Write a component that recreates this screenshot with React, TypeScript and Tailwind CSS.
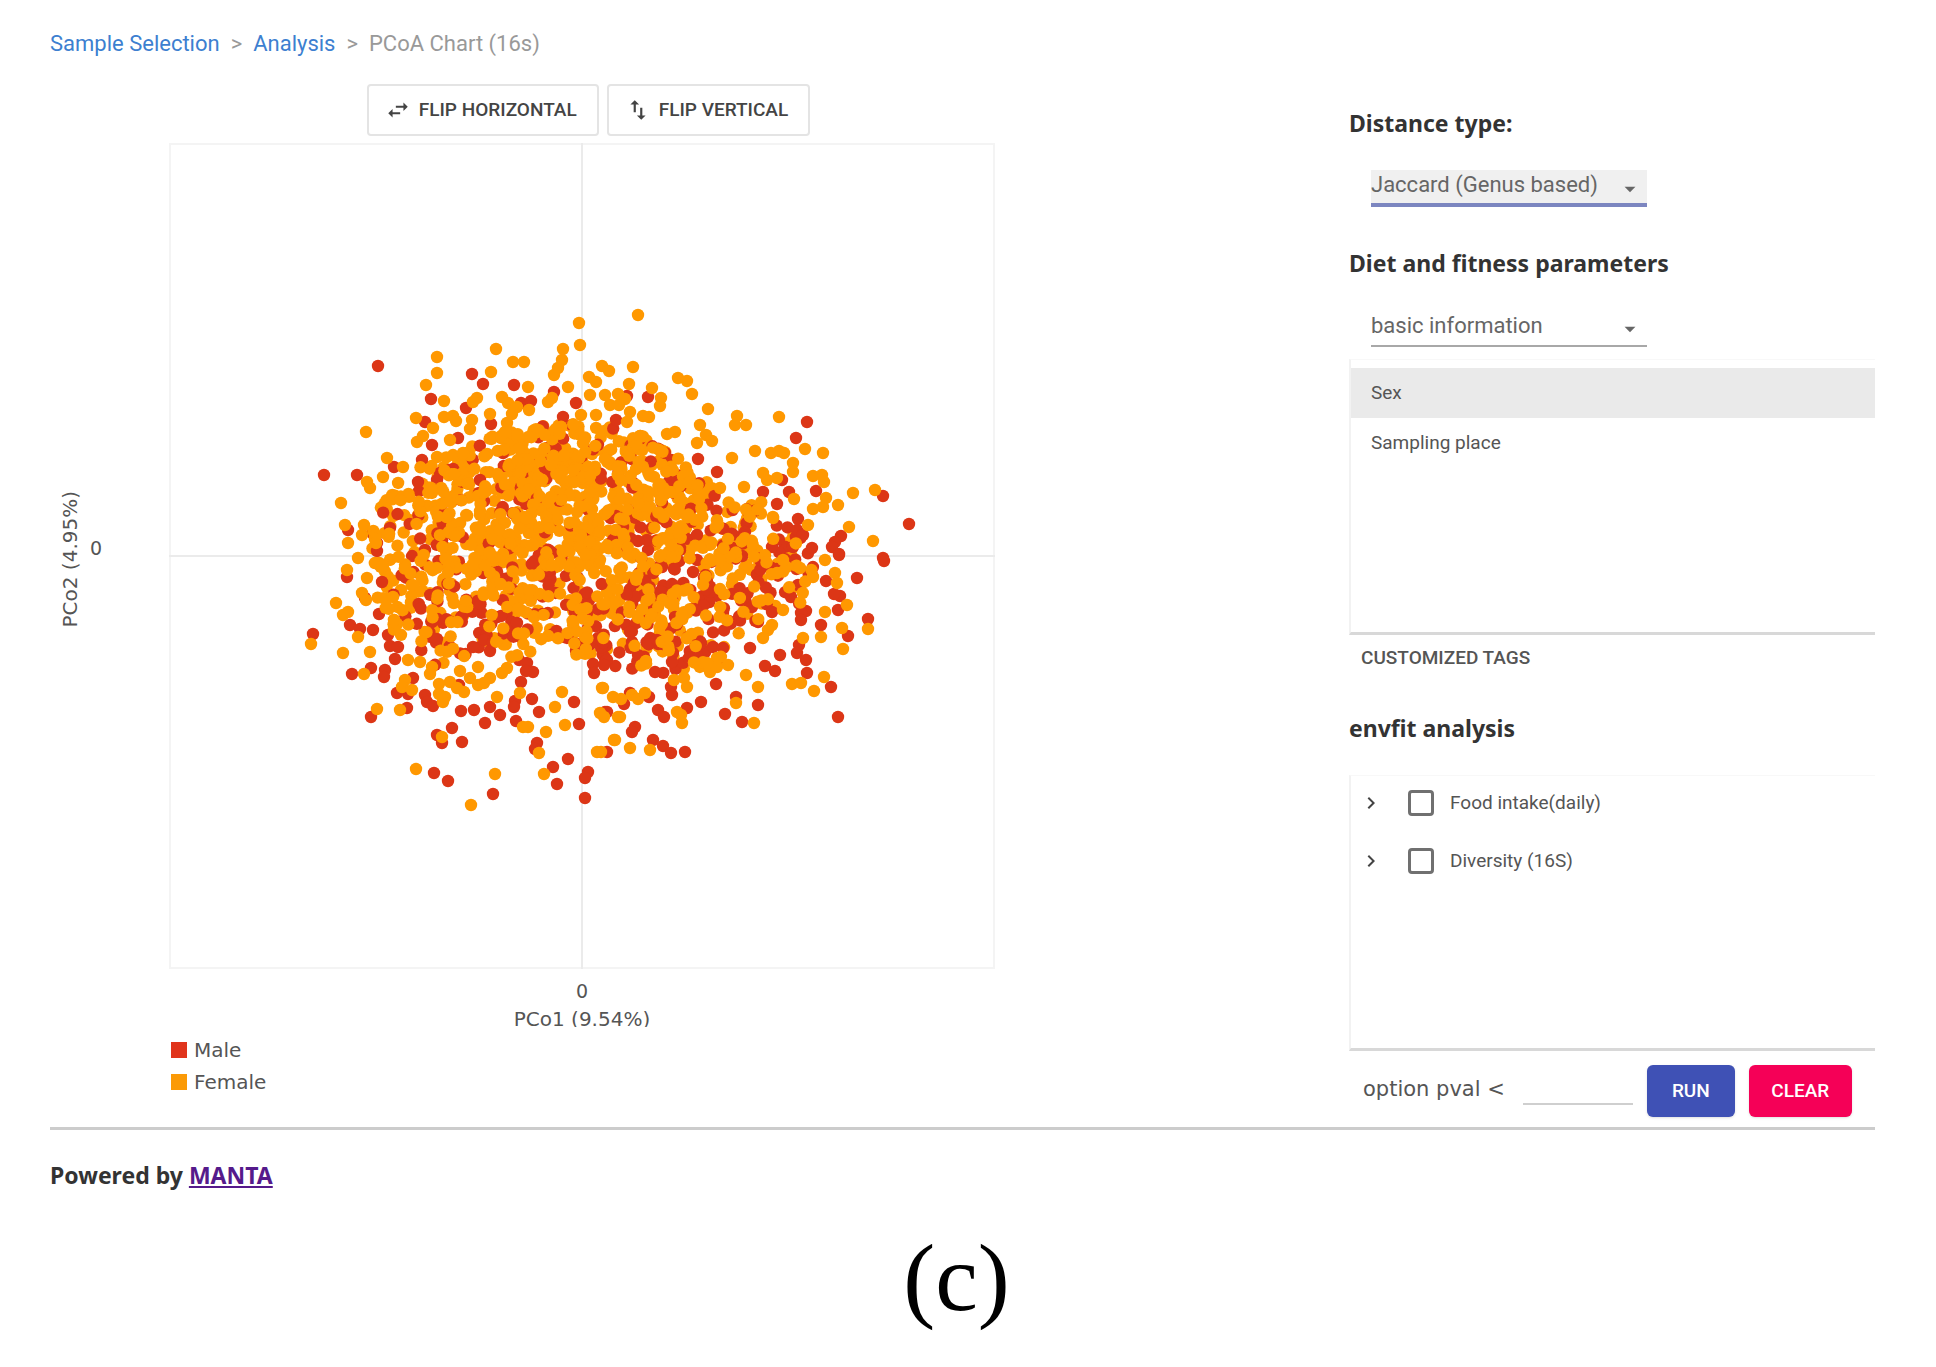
import { useMemo, useState } from "react";
import { MdArrowDropDown, MdChevronRight, MdSwapHoriz, MdSwapVert } from "react-icons/md";

type Point = [number, number];
type Sample = { x: number; y: number; sex: 'male' | 'female' };

const SIZE = 826;

// Outer samples, in chart units
const femalePoints: Point[] = [
  [410,180],[411,202],[327,206],[268,214],[268,230],[394,206],[393,217],[389,225],[385,232],[344,219],[355,219],[322,229],
  [433,223],[440,228],[257,242],[359,244],[399,244],[420,234],[427,239],[275,258],[308,255],[304,259],[333,254],[339,260],[348,264],
  [360,267],[379,259],[383,255],[421,252],[247,275],[275,274],[284,273],[287,278],[321,271],[301,286],[248,299],[254,293],[197,289],
  [218,315],[234,324],[214,334],[198,339],[201,345],[172,360],[176,382],[179,400],[195,382],[193,392],[189,415],[338,280],
  [336,289],[281,297],[294,310],[268,314],[469,172],[464,224],[509,235],[518,238],[523,251],[460,241],[483,245],[492,255],
  [491,263],[539,266],[568,273],[566,282],[577,282],[610,274],[474,273],[480,274],[458,279],[461,269],[531,282],[537,292],[543,298],
  [528,300],[506,289],[498,291],[471,293],[586,308],[602,310],[610,308],[615,310],[636,306],[654,310],[563,315],[624,320],[624,329],
  [644,333],[653,332],[655,339],[684,350],[706,347],[669,362],[657,355],[654,364],[644,366],[625,356],[680,384],[704,398],
  [575,344],[551,345],[639,382],[594,330],[598,337],[608,335],[198,435],[167,460],[179,469],[174,472],[142,501],[174,510],
  [224,454],[197,457],[228,481],[225,477],[189,494],[201,509],[195,531],[236,537],[233,544],[239,517],[208,566],[231,567],
  [273,594],[247,626],[326,631],[302,662],[263,524],[261,531],[281,539],[276,554],[274,559],[309,524],[309,542],[321,535],
  [338,525],[333,530],[295,549],[328,554],[354,584],[359,584],[377,589],[386,564],[393,549],[396,582],[370,610],[375,631],
  [433,545],[444,554],[431,570],[445,597],[428,609],[432,609],[449,574],[351,550],[673,485],[674,506],[699,486],[678,462],
  [666,430],[668,440],[656,417],[656,469],[652,494],[655,534],[645,548],[623,541],[632,540],[634,495],[577,532],[589,544],
  [585,580],[567,560],[513,580],[508,569],[518,544],[461,605],[446,597],[481,607],[451,574],[434,545],[559,522],[541,529],
  [548,515],[599,487],[603,482],[594,495],[614,467],[644,434],[631,425],[608,430],[614,417],[456,256],[441,262],[449,251],
  [427,272],[412,272],[264,285],[303,277],[343,271],[450,262],[436,252],[178,427],[207,400],[214,423],[193,450],[243,547],
  [288,545],[291,528],[301,535],[315,540],[251,519],[270,541],[270,551],[452,556],[463,552],[469,556],[476,550],[505,537],
  [515,535],[512,572],[435,574],[548,524],[538,520],
];

const malePoints: Point[] = [
  [209,223],[303,231],[314,241],[345,242],[385,249],[407,260],[262,256],[297,265],[256,279],[263,302],[253,317],[225,324],
  [188,332],[155,332],[352,260],[362,258],[322,281],[289,295],[394,274],[403,282],[447,277],[334,310],[271,330],[268,337],
  [249,339],[311,337],[310,350],[221,385],[284,392],[208,408],[256,407],[179,387],[458,253],[479,254],[638,279],[627,295],
  [496,310],[529,316],[548,329],[647,348],[714,353],[740,381],[620,349],[608,361],[613,337],[594,349],[629,376],[628,387],
  [634,392],[672,393],[666,399],[663,404],[670,412],[714,415],[643,405],[624,404],[603,404],[576,389],[574,392],[478,397],
  [469,398],[453,375],[454,384],[528,392],[521,337],[506,342],[144,491],[178,434],[213,439],[210,471],[263,479],[268,496],
  [181,482],[191,486],[204,487],[219,492],[221,503],[229,504],[226,516],[183,531],[202,525],[216,527],[215,534],[228,550],
  [239,551],[244,535],[238,565],[202,574],[256,552],[258,559],[264,563],[292,568],[305,567],[321,564],[316,580],[331,572],
  [346,558],[345,564],[347,578],[363,556],[370,569],[352,539],[405,559],[410,581],[283,585],[268,592],[273,600],[293,599],
  [265,630],[279,638],[324,651],[368,600],[366,606],[384,624],[399,616],[388,641],[419,629],[416,635],[416,655],[438,609],
  [436,569],[321,508],[304,504],[332,473],[348,480],[358,520],[364,529],[407,508],[424,521],[433,498],[418,470],[419,485],
  [715,418],[688,435],[670,411],[699,476],[679,493],[669,467],[671,453],[665,451],[657,438],[652,482],[637,468],[632,470],
  [632,477],[630,502],[628,510],[637,517],[638,530],[662,544],[669,574],[611,512],[596,523],[606,528],[589,562],[589,479],
  [581,505],[573,579],[556,571],[567,554],[532,559],[547,541],[518,565],[502,544],[503,552],[489,567],[495,574],[466,584],
  [463,589],[484,597],[494,603],[502,610],[516,609],[480,554],[455,561],[438,569],[486,529],[504,510],[503,519],[629,442],
  [622,454],[554,470],[544,504],[554,505],[528,417],[524,429],[591,417],[603,469],[583,464],[503,457],[506,474],[488,497],
  [461,489],[463,499],[469,512],[434,500],[438,517],[357,528],[208,400],[196,455],[290,542],[461,550],[425,530],[435,522],
];

// Outline of the dense middle of the cloud
const core: Point[] = [
  [215,352],[250,322],[290,308],[330,290],[380,278],[440,284],[485,296],[530,325],[560,355],[600,358],[630,385],[650,425],
  [640,462],[600,472],[570,497],[550,518],[510,534],[460,528],[420,516],[385,504],[350,518],[310,508],[270,524],[235,506],
  [210,460],[200,425],[202,390],
];

function inCore(x: number, y: number) {
  let inside = false;
  for (let i = 0, j = core.length - 1; i < core.length; j = i++) {
    const [xi, yi] = core[i];
    const [xj, yj] = core[j];
    if (yi > y !== yj > y && x < ((xj - xi) * (y - yi)) / (yj - yi) + xi) inside = !inside;
  }
  return inside;
}

function buildSamples(): Sample[] {
  let seed = 7;
  const random = () => {
    seed = (seed * 1664525 + 1013904223) % 4294967296;
    return seed / 4294967296;
  };
  const females: Sample[] = [];
  const males: Sample[] = [];
  while (females.length + males.length < 1450) {
    const x = 195 + random() * 460;
    const y = 275 + random() * 265;
    const keep = random();
    const pick = random();
    if (!inCore(x, y)) continue;
    const distance = Math.hypot((x - 390) / 230, (y - 370) / 170);
    if (keep > 1.1 - distance * 0.6) continue;
    const maleShare = 0.14 + Math.max(0, (y - 370) / 170) * 0.36 + Math.max(0, (x - 440) / 200) * 0.22;
    if (pick < maleShare) males.push({ x, y, sex: 'male' });
    else females.push({ x, y, sex: 'female' });
  }
  const half = Math.floor(females.length * 0.5);
  return [
    ...females.slice(0, half),
    ...males,
    ...malePoints.map(([x, y]): Sample => ({ x, y, sex: 'male' })),
    ...females.slice(half),
    ...femalePoints.map(([x, y]): Sample => ({ x, y, sex: 'female' })),
  ];
}

function ScatterChart({ flipX, flipY }: { flipX: boolean; flipY: boolean }) {
  const samples = useMemo(buildSamples, []);

  return (
    <svg viewBox="0 0 826 826" className="block w-[826px] shrink-0" role="img" aria-label="PCoA scatter chart">
      <rect x="1" y="1" width="824" height="824" fill="none" stroke="#f4f4f4" strokeWidth="2" />
      <path d="M413 0V826M0 413H826" stroke="#ebebeb" strokeWidth="2" />
      {samples.map((s, i) => (
        <circle
          key={i}
          cx={flipX ? SIZE - s.x : s.x}
          cy={flipY ? SIZE - s.y : s.y}
          r="6.2"
          fill={s.sex === 'male' ? '#dc3616' : '#ff9800'}
        />
      ))}
    </svg>
  );
}

function FieldSelect({ id, options, active = false }: { id: string; options: string[]; active?: boolean }) {
  return (
    <div className="relative ml-[22px] mt-8 w-[276px]">
      <select
        id={id}
        className={`block h-[37px] w-full appearance-none pb-1 font-[Roboto] text-[22px] leading-7 text-[#666] outline-none ${
          active ? 'border-b-4 border-[#7c86c0] bg-[#f0f0f0]' : 'border-b-2 border-[#a8a8a8] bg-white'
        }`}
      >
        {options.map((option) => (
          <option key={option}>{option}</option>
        ))}
      </select>
      <MdArrowDropDown className="pointer-events-none absolute right-1 top-1.5 size-[26px] text-[#666]" />
    </div>
  );
}

export default function App() {
  const [flipX, setFlipX] = useState(false);
  const [flipY, setFlipY] = useState(false);
  const [tag, setTag] = useState('Sex');

  return (
    <div className="min-h-screen bg-white pl-[50px] pr-[61px] pt-7 font-['DejaVu_Sans',sans-serif] text-[20px] text-[#555]">
      <nav aria-label="Breadcrumb" className="flex gap-[11px] font-[Roboto] text-[22px] leading-8 text-[#999]">
        <a href="#samples" className="text-[#3d7fd0]">Sample Selection</a>
        <span>&gt;</span>
        <a href="#analysis" className="text-[#3d7fd0]">Analysis</a>
        <span>&gt;</span>
        <span>PCoA Chart (16s)</span>
      </nav>

      <main className="mt-6 flex justify-between">
        <section className="w-[1077px]">
          <div className="flex justify-center gap-2 font-[Roboto] text-[19px] font-medium text-[#444]">
            <button
              onClick={() => setFlipX(!flipX)}
              className="flex h-[52px] items-center gap-2 rounded-sm border-2 border-[#e4e4e4] pl-4 pr-5"
            >
              <MdSwapHoriz className="size-[26px]" />
              FLIP HORIZONTAL
            </button>
            <button
              onClick={() => setFlipY(!flipY)}
              className="flex h-[52px] items-center gap-2 rounded-sm border-2 border-[#e4e4e4] pl-4 pr-5"
            >
              <MdSwapVert className="size-[26px]" />
              FLIP VERTICAL
            </button>
          </div>

          {/* Chart */}
          <div className="mt-[7px] flex leading-6">
            <div className="flex w-[119px] shrink-0 items-center gap-2 pl-2">
              <span className="rotate-180 pb-1.5 [writing-mode:vertical-rl]">PCo2 (4.95%)</span>
              <span className="pb-4 text-[19px]">0</span>
            </div>
            <ScatterChart flipX={flipX} flipY={flipY} />
          </div>
          <div className="ml-[119px] w-[826px] pt-2.5 text-center leading-6">
            <p className="text-[19px]">0</p>
            <p className="mt-1 h-5 overflow-hidden">PCo1 (9.54%)</p>
          </div>
          <ul className="ml-[121px] mt-[7px] leading-8">
            <li className="flex items-center gap-[7px]">
              <span className="size-4 bg-[#e0341c]"></span>Male
            </li>
            <li className="flex items-center gap-[7px]">
              <span className="size-4 bg-[#fb9a06]"></span>Female
            </li>
          </ul>
        </section>

        {/* Settings */}
        <aside className="w-[526px] pt-6">
          <label htmlFor="distance" className="block font-['Noto_Sans'] text-[23px] font-bold leading-[30px] text-[#333]">
            Distance type:
          </label>
          <FieldSelect id="distance" options={['Jaccard (Genus based)', 'Bray-Curtis (Genus based)']} active />

          <label htmlFor="parameters" className="mt-[41px] block font-['Noto_Sans'] text-[23px] font-bold leading-[30px] text-[#333]">
            Diet and fitness parameters
          </label>
          <FieldSelect id="parameters" options={['basic information', 'Food intake']} />

          <div className="mt-3 h-[276px] border-b-[3px] border-l-2 border-t border-b-[#d8d8d8] border-l-[#f2f2f2] border-t-[#f8f8f8] pt-2 font-[Roboto] text-[19px]">
            {['Sex', 'Sampling place'].map((name) => (
              <button
                key={name}
                onClick={() => setTag(name)}
                className={`block h-[50px] w-full px-5 text-left ${tag === name ? 'bg-[#eaeaea]' : ''}`}
              >
                {name}
              </button>
            ))}
          </div>
          <button className="block h-[46px] px-3 font-[Roboto] text-[19px] font-medium text-[#555]">CUSTOMIZED TAGS</button>

          <h2 className="mt-8 font-['Noto_Sans'] text-[23px] font-bold leading-[30px] text-[#333]">envfit analysis</h2>
          <div className="mt-8 h-[276px] border-b-[3px] border-l-2 border-t border-b-[#d8d8d8] border-l-[#f2f2f2] border-t-[#f8f8f8] font-[Roboto] text-[19px]">
            {['Food intake(daily)', 'Diversity (16S)'].map((name) => (
              <div key={name} className="flex h-[58px] items-center pb-1 pl-2">
                <button aria-label={`Expand ${name}`}>
                  <MdChevronRight className="size-6 text-[#444]" />
                </button>
                <label className="ml-[25px] flex items-center gap-4">
                  <input type="checkbox" className="size-[26px] appearance-none rounded-sm border-3 border-[#707070] checked:bg-[#3f51b5]" />
                  {name}
                </label>
              </div>
            ))}
          </div>

          <div className="mt-3.5 flex h-[52px] items-stretch pl-3.5">
            <label htmlFor="pval" className="self-center pb-0.5 text-[21px]">option pval &lt;</label>
            <input id="pval" type="text" className="mb-3 ml-[18px] w-[110px] border-b-2 border-[#cfcfcf] outline-none" />
            <button className="ml-3.5 w-[88px] rounded-md bg-[#3f51b5] font-[Roboto] text-[19px] font-medium text-white shadow">RUN</button>
            <button className="ml-3.5 w-[103px] rounded-md bg-[#f50057] font-[Roboto] text-[19px] font-medium text-white shadow">CLEAR</button>
          </div>
        </aside>
      </main>

      <hr className="mt-2.5 border-t-[3px] border-[#cccccc]" />

      <footer>
        <p className="mt-[30px] font-['Noto_Sans'] text-[23px] font-bold leading-[30px] text-[#333]">
          Powered by <a href="#manta" className="text-[#551a8b] underline">MANTA</a>
        </p>
        <p className="mt-7 pr-3 text-center font-['Liberation_Serif',serif] text-[96px] leading-[120px] text-black">(c)</p>
      </footer>
    </div>
  );
}
